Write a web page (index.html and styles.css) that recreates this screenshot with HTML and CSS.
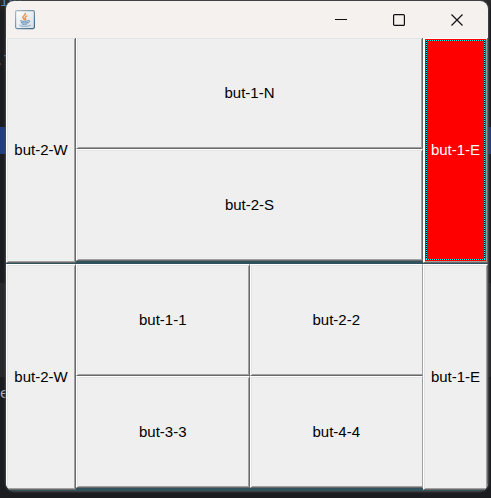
FILE: index.html
```
<!DOCTYPE html>
<html lang="en">
<head>
<meta charset="utf-8">
<title>Nested layouts</title>
<link rel="stylesheet" href="styles.css">
</head>
<body>
<div class="backdrop" aria-hidden="true">
  <span class="code code-top">int</span>
  <span class="code code-mid">.7</span>
  <span class="band"></span>
  <span class="shade"></span>
  <span class="code code-end">e</span>
</div>
<main class="window">
  <header class="titlebar">
    <svg class="app-icon" viewBox="0 0 20 20" aria-hidden="true">
      <defs>
        <linearGradient id="tile" x1="0" y1="0" x2="1" y2="1">
          <stop offset="0" stop-color="#fff"/><stop offset="1" stop-color="#d5dee6"/>
        </linearGradient>
        <linearGradient id="edge" x1="0" y1="0" x2="1" y2="1">
          <stop offset="0" stop-color="#a9bac7"/><stop offset="1" stop-color="#376581"/>
        </linearGradient>
      </defs>
      <rect x=".6" y=".6" width="18.8" height="18" rx="1.5" fill="url(#tile)" stroke="url(#edge)" stroke-width="1.2"/>
      <path d="M10.300 3.300C11.200 5.200 7.200 5.800 7.800 7.500c.3.8 1.200 1.200 1.500 2.200M12 6C9.800 6.800 9.600 7.800 10.400 8.700c.5.5.3 1-.1 1.300" fill="none" stroke="#ee8a3c" stroke-width="1.300" stroke-linecap="round"/>
      <path d="M5.500 10.800c2 .8 6 .8 7.500 0M6.200 12.500c2 .7 4.800.7 6.300 0M7 14c1.300.5 3.700.5 4.800 0M13.300 10.600c2.200-.5 2.100 1.800-.4 2.400" fill="none" stroke="#5f8caf" stroke-width="1" stroke-linecap="round"/>
      <path d="M4.500 15.200c-.8 1.600 10.500 1.500 11 .1" fill="none" stroke="#7fa3c0" stroke-width="1" stroke-linecap="round"/>
    </svg>
    <div class="controls">
      <button class="control" aria-label="Minimize"><svg viewBox="0 0 12 12"><path d="M0 5.500h12"/></svg></button>
      <button class="control" aria-label="Maximize"><svg viewBox="0 0 12 12"><rect x=".6" y=".6" width="10.800" height="10.800" rx="1"/></svg></button>
      <button class="control" aria-label="Close"><svg viewBox="0 0 12 12"><path d="M.5.5l11 11M11.500.5l-11 11"/></svg></button>
    </div>
  </header>
  <section class="panel">
    <button class="btn">but-2-W</button>
    <div class="center stack">
      <button class="btn">but-1-N</button>
      <button class="btn">but-2-S</button>
    </div>
    <button class="btn focused">but-1-E</button>
  </section>
  <section class="panel">
    <button class="btn">but-2-W</button>
    <div class="center quad">
      <button class="btn">but-1-1</button>
      <button class="btn thin">but-2-2</button>
      <button class="btn">but-3-3</button>
      <button class="btn thin">but-4-4</button>
    </div>
    <button class="btn">but-1-E</button>
  </section>
</main>
</body>
</html>
```
FILE: styles.css
```
* { box-sizing: border-box; }

body {
  margin: 0;
  height: 100vh;
  padding: 1px 3px 7px 6px;
  background: #1b1c1f;
  font-family: "Liberation Sans", Arial, sans-serif;
  overflow: hidden;
}

.backdrop {
  position: absolute;
  inset: 0;
  overflow: hidden;
  background: linear-gradient(#2b2b2e, #1b1c1f 12px);
}

.code {
  position: absolute;
  left: 0;
  color: #aeb4bb;
  font: 14px "DejaVu Sans Mono", monospace;
}

.code-top { top: -7px; color: #4f8ac4; }
.code-mid { top: 52px; left: -5px; }
.code-end { top: 385px; }

.band,
.shade {
  position: absolute;
  left: 0;
  width: 100%;
}

.band {
  top: 127px;
  height: 27px;
  background: #213f80;
}

.shade {
  top: 283px;
  height: 94px;
  background: #26282c;
}

.window {
  position: relative;
  display: flex;
  flex-direction: column;
  height: 100%;
  border-radius: 8px;
  overflow: hidden;
  background: #30525c;
  box-shadow: 0 0 2px 1px #4a4a4c;
}

.titlebar {
  position: relative;
  z-index: 1;
  display: flex;
  flex: none;
  align-items: center;
  justify-content: space-between;
  height: 37px;
  margin-bottom: -1px;
  padding: 0 2px 0 9px;
  background: #f5f1ef;
}

.app-icon { width: 20px; height: 20px; }

.controls { display: flex; }

.control {
  display: grid;
  place-items: center;
  width: 58px;
  height: 36px;
  padding: 0;
  border: 0;
  background: none;
}

.control svg {
  width: 12px;
  height: 12px;
  fill: none;
  stroke: #111;
  stroke-width: 1.2;
}

.panel {
  display: grid;
  flex: 1;
  grid-template-columns: 70px 1fr 65px;
  padding-bottom: 1px;
  min-height: 0;
}

.center {
  display: grid;
  grid-auto-rows: 1fr;
  padding-bottom: 2px;
}

.quad { grid-template-columns: 1fr 1fr; }

.btn {
  position: relative;
  min-width: 0;
  padding: 0 0 2px;
  border: 1px solid;
  border-color: #fff #696969 #696969 #fff;
  background: #efefef;
  box-shadow: inset 1px 1px #e3e3e3, inset -1px -1px #a0a0a0;
  color: #000;
  font: 15px "Liberation Sans", Arial, sans-serif;
}

.btn.thin {
  border-right-color: #a0a0a0;
  box-shadow: inset 1px 1px #e3e3e3, inset 0 -1px #a0a0a0;
}

.btn.focused {
  background: #f00;
  box-shadow: inset 1px 1px #fff, inset -1px -1px #a0a0a0;
  color: #fff;
}

/* Focus ring of alternating cyan and black pixels */
.btn.focused::after {
  --across: repeating-linear-gradient(90deg, #0ff 0 1px, #000 1px 2px);
  --down: repeating-linear-gradient(#0ff 0 1px, #000 1px 2px);
  content: "";
  position: absolute;
  inset: 2px;
  background:
    var(--across) top / 100% 1px no-repeat,
    var(--across) bottom / 100% 1px no-repeat,
    var(--down) left / 1px 100% no-repeat,
    var(--down) right / 1px 100% no-repeat;
}
```
